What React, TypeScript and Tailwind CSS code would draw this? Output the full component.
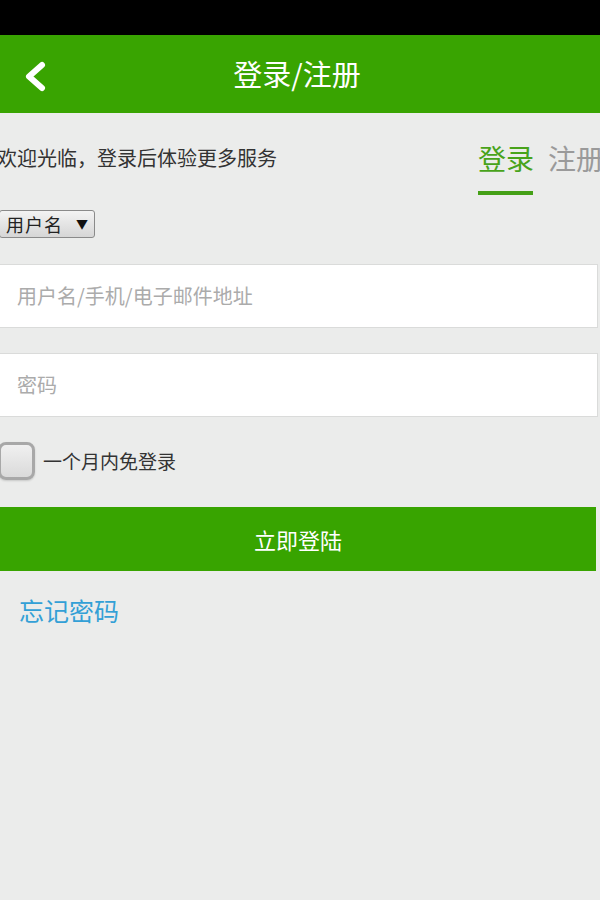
import React from "react";

export default function App() {
  return (
    <div className="w-[600px] min-h-[900px] bg-[#ebeceb] overflow-hidden font-['Noto_Sans_CJK_SC','Noto_Sans',sans-serif] text-[#333]">
      <div className="h-[35px] bg-black" />
      <header className="h-[78px] bg-[#39a401] grid grid-cols-[1fr_auto_1fr] items-center">
        <div className="pl-[24px] flex items-center">
          <svg width="24" height="42" viewBox="0 0 24 42" fill="none">
            <polyline
              points="18,12 5,23.5 18,35"
              stroke="white"
              strokeWidth="6"
              strokeLinecap="round"
              strokeLinejoin="round"
            />
          </svg>
        </div>
        <h1 className="text-[29px] leading-[36px] text-white pr-[6px] -mt-[3px]">登录/注册</h1>
        <div />
      </header>

      <div className="flex justify-between items-start">
        <p className="mt-[31px] -ml-[3px] text-[20px] leading-[28px] text-[#333]">欢迎光临，登录后体验更多服务</p>
        <div className="mt-[27px] flex items-start -mr-[4px]">
          <div className="flex flex-col items-start">
            <span className="text-[28px] leading-[36px] text-[#48a31a]">登录</span>
            <div className="mt-[15px] h-[4px] w-[55px] bg-[#44a016]" />
          </div>
          <span className="ml-[14px] text-[28px] leading-[36px] text-[#9a9a9a]">注册</span>
        </div>
      </div>

      <div className="mt-[15px] w-[96px] h-[28px] -ml-[1px] border border-[#8a8a8a] rounded-[3px] bg-gradient-to-b from-[#f3f3f3] to-[#d6d6d6] flex items-center pl-[6px]">
        <span className="text-[18px] leading-[24px] text-[#222] tracking-[1px]">用户名</span>
        <span className="ml-[13px] text-[12px] leading-[24px] text-[#111]">▼</span>
      </div>

      <div className="mt-[26px] w-[599px] -ml-[1px] h-[64px] bg-white border border-[#dadbda] flex items-center pl-[17px]">
        <span className="text-[20px] text-[#ababab]">用户名/手机/电子邮件地址</span>
      </div>

      <div className="mt-[25px] w-[599px] -ml-[1px] h-[64px] bg-white border border-[#dadbda] flex items-center pl-[17px]">
        <span className="text-[20px] text-[#ababab]">密码</span>
      </div>

      <div className="mt-[25px] flex items-center">
        <div className="-ml-[2px] w-[37px] h-[38px] rounded-[8px] border-[3px] border-[#a8a8a8] bg-gradient-to-b from-[#f0f0f0] to-[#dadada] shadow-[0_1px_2px_rgba(0,0,0,0.15)]" />
        <span className="ml-[8px] text-[19px] leading-[28px] text-[#333]">一个月内免登录</span>
      </div>

      <button className="mt-[27px] w-[596px] h-[64px] bg-[#38a400] text-white text-[22px] flex items-center justify-center">
        立即登陆
      </button>

      <p className="mt-[23px] ml-[19px] text-[25px] leading-[32px] text-[#33a0d6]">忘记密码</p>
    </div>
  );
}
